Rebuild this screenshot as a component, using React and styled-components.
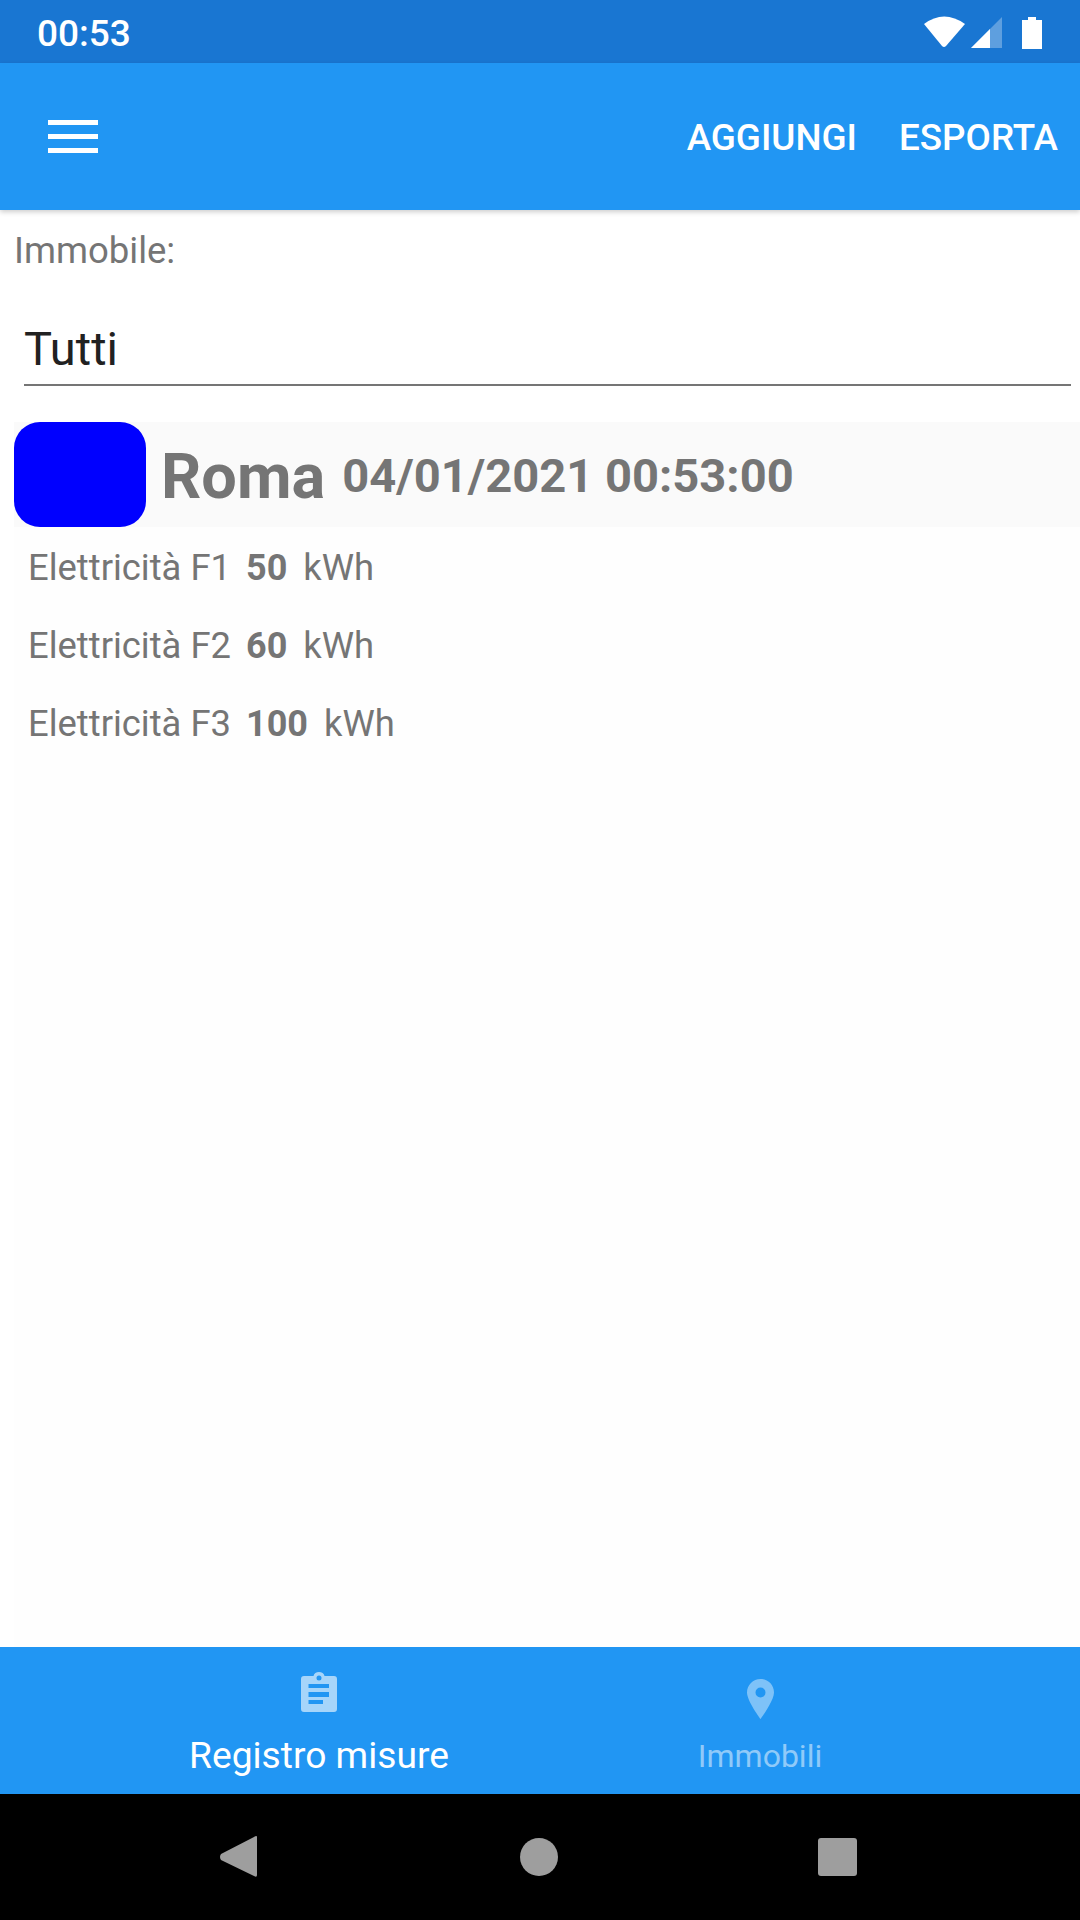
import React from 'react';
import styled, { createGlobalStyle } from 'styled-components';

const Global = createGlobalStyle`
  html, body { margin: 0; padding: 0; background: #fff; }
  body { font-family: Roboto, "Liberation Sans", sans-serif; }
  #root { width: 1080px; height: 1920px; }
`;
const Screen = styled.div`
  width: 1080px; height: 1920px; display: flex; flex-direction: column; overflow: hidden; background: #fff;
`;
const StatusBar = styled.div`
  height: 63px; flex: none; background: #1976d2; display: flex; align-items: center; justify-content: space-between;
  padding: 0 36px 0 37px; box-sizing: border-box; color: #fff;
`;
const Clock = styled.span`font-size: 37px; font-weight: 500; line-height: 63px; padding-top: 3px;`;
const StatusIcons = styled.svg`display: block; margin-top: 2px;`;
const AppBar = styled.header`
  height: 147px; flex: none; background: #2196f3; display: flex; align-items: center; justify-content: space-between;
  padding: 0 22px 0 48px; box-sizing: border-box; color: #fff; box-shadow: 0 2px 5px rgba(0,0,0,.2); position: relative;
`;
const Burger = styled.div`
  width: 50px; display: flex; flex-direction: column; gap: 9px;
  & > i { display: block; height: 5px; background: #fff; }
`;
const Actions = styled.div`display: flex; gap: 42px; padding-top: 2px;`;
const Action = styled.span`font-size: 36.8px; font-weight: 500; line-height: 40px;`;
const Main = styled.main`flex: 1; min-height: 0; display: flex; flex-direction: column;`;
const Label = styled.div`
  font-size: 36.5px; color: #757575; line-height: 42px; padding: 20px 0 0 14px;
`;
const Select = styled.div`
  margin: 42px 9px 0 24px; height: 70px; border-bottom: 2px solid #757575; font-size: 47px; color: #212121; line-height: 70px;
`;
const List = styled.div`
  flex: 1; margin: 36px 0 0 14px; background: #fefefe;
`;
const Row = styled.div`
  height: 105px; background: #fafafa; display: flex; align-items: center;
`;
const Swatch = styled.div`width: 132px; height: 105px; border-radius: 26px; background: #0000ff; flex: none;`;
const City = styled.span`font-size: 63px; font-weight: 700; color: #757575; margin-left: 15px; padding-top: 4px;`;
const When = styled.span`font-size: 47.1px; font-weight: 700; color: #757575; margin-left: 17px; padding-top: 2px;`;
const Measures = styled.div`display: flex; flex-direction: column; padding: 20px 0 0 14px; gap: 36px;`;
const Measure = styled.div`
  display: flex; font-size: 36.4px; line-height: 42px; color: #757575; align-items: baseline;
`;
const Value = styled.b`font-size: 36px; font-weight: 700; margin: 0 16px 0 15px;`;
const BottomNav = styled.nav`height: 147px; flex: none; background: #2196f3; display: flex;`;
const Tab = styled.div`
  width: ${p => p.$w}px; display: flex; flex-direction: column; align-items: center;
  color: ${p => p.$active ? '#fff' : '#90caf9'};
`;
const TabIcon = styled.svg`display: block; margin-top: ${p => p.$top}px; flex: none;`;
const TabText = styled.span`
  font-size: ${p => p.$active ? '37.2px' : '32px'}; line-height: 42px; margin-top: ${p => p.$active ? '21px' : '16px'};
`;
const SystemNav = styled.div`
  height: 126px; flex: none; background: #000; display: flex; align-items: center;
  padding-left: 219px; box-sizing: border-box;
`;

export default function App() {
  return (
    <Screen>
      <Global />
      <StatusBar>
        <Clock>00:53</Clock>
        <StatusIcons width="120" height="36" viewBox="0 0 120 36">
          <path d="M0 9 Q20 -6 41 9 L22 31 Q20 33 18 31 Z" fill="#fff" />
          <path d="M47 33 L78 2 L78 33 Z" fill="#fff" fillOpacity=".3" />
          <path d="M47 33 L66 14 L66 33 Z" fill="#fff" />
          <path d="M98 5 H104 V2 H112 V5 H118 V34 H98 Z" fill="#fff" />
        </StatusIcons>
      </StatusBar>
      <AppBar>
        <Burger><i /><i /><i /></Burger>
        <Actions><Action>AGGIUNGI</Action><Action>ESPORTA</Action></Actions>
      </AppBar>
      <Main>
        <Label>Immobile:</Label>
        <Select>Tutti</Select>
        <List>
          <Row>
            <Swatch />
            <City>Roma</City>
            <When>04/01/2021 00:53:00</When>
          </Row>
          <Measures>
            <Measure>Elettricità F1<Value>50</Value>kWh</Measure>
            <Measure>Elettricità F2<Value>60</Value>kWh</Measure>
            <Measure>Elettricità F3<Value>100</Value>kWh</Measure>
          </Measures>
        </List>
      </Main>
      <BottomNav>
        <Tab $w={638} $active>
          <TabIcon $top={25} width="36" height="41" viewBox="0 0 36 41">
            <path fill="#a6d5fa" fillRule="evenodd" d="M3 4 H12.5 C13 1.5 15.2 0 18 0 C20.8 0 23 1.5 23.5 4 H33 Q36 4 36 7 V37 Q36 40 33 40 H3 Q0 40 0 37 V7 Q0 4 3 4 Z M18 3.5 A2.5 2.5 0 1 0 18 8.5 A2.5 2.5 0 1 0 18 3.5 Z M7.5 12 V16 H28 V12 Z M7.5 20 V25 H28 V20 Z M7.5 28 V32 H22 V28 Z" />
          </TabIcon>
          <TabText $active>Registro misure</TabText>
        </Tab>
        <Tab $w={244}>
          <TabIcon $top={32} width="27" height="40" viewBox="0 0 27 40">
            <path fill="#7ec2f8" fillRule="evenodd" d="M13.5 0 C6 0 0 6 0 13.5 C0 22 13.5 40 13.5 40 C13.5 40 27 22 27 13.5 C27 6 21 0 13.5 0 Z M13.5 8.5 A5 5 0 1 1 13.5 18.5 A5 5 0 1 1 13.5 8.5 Z" />
          </TabIcon>
          <TabText>Immobili</TabText>
        </Tab>
      </BottomNav>
      <SystemNav>
        <svg width="640" height="42" viewBox="0 0 640 42">
          <path d="M38 1 V39 Q38 42 35 40 L2 24 Q0 21 2 18 L35 1 Q38 -1 38 1 Z" fill="#9e9e9e" />
          <circle cx="320" cy="21" r="19" fill="#9e9e9e" />
          <rect x="599" y="2" width="39" height="38" rx="3" fill="#9e9e9e" />
        </svg>
      </SystemNav>
    </Screen>
  );
}
